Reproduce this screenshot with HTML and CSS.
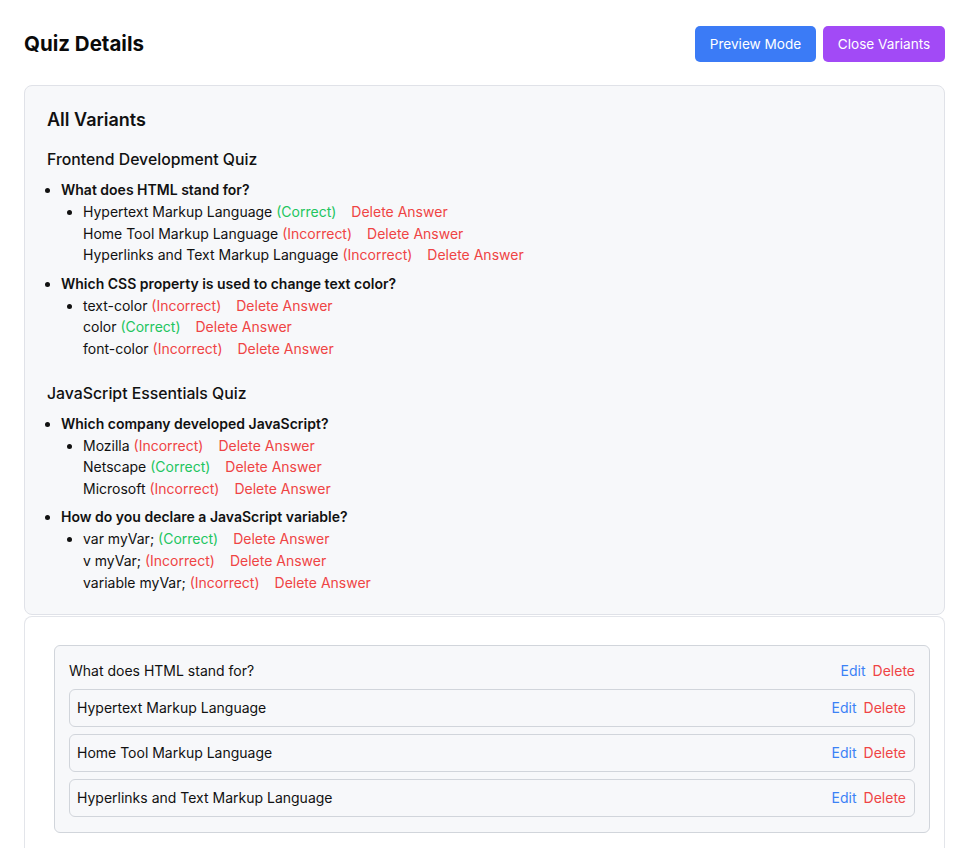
FILE: index.html
```html
<!DOCTYPE html>
<html lang="en">
<head>
<meta charset="utf-8">
<title>Quiz Details</title>
<link rel="stylesheet" href="styles.css">
</head>
<body>
<div class="page">
  <header class="header">
    <h1 class="title">Quiz Details</h1>
    <div class="actions">
      <button class="btn btn-blue">Preview Mode</button>
      <button class="btn btn-purple">Close Variants</button>
    </div>
  </header>

  <section class="variants">
    <h2 class="variants-title">All Variants</h2>

    <div class="quiz">
      <h3 class="quiz-title">Frontend Development Quiz</h3>
      <ul class="questions">
        <li class="question">
          <span class="q-text">What does HTML stand for?</span>
          <ul class="answers">
            <li class="answer">Hypertext Markup Language <span class="ok">(Correct)</span><span class="del">Delete Answer</span></li>
            <li class="answer">Home Tool Markup Language <span class="bad">(Incorrect)</span><span class="del">Delete Answer</span></li>
            <li class="answer">Hyperlinks and Text Markup Language <span class="bad">(Incorrect)</span><span class="del">Delete Answer</span></li>
          </ul>
        </li>
        <li class="question">
          <span class="q-text">Which CSS property is used to change text color?</span>
          <ul class="answers">
            <li class="answer">text-color <span class="bad">(Incorrect)</span><span class="del">Delete Answer</span></li>
            <li class="answer">color <span class="ok">(Correct)</span><span class="del">Delete Answer</span></li>
            <li class="answer">font-color <span class="bad">(Incorrect)</span><span class="del">Delete Answer</span></li>
          </ul>
        </li>
      </ul>
    </div>

    <div class="quiz">
      <h3 class="quiz-title">JavaScript Essentials Quiz</h3>
      <ul class="questions">
        <li class="question">
          <span class="q-text">Which company developed JavaScript?</span>
          <ul class="answers">
            <li class="answer">Mozilla <span class="bad">(Incorrect)</span><span class="del">Delete Answer</span></li>
            <li class="answer">Netscape <span class="ok">(Correct)</span><span class="del">Delete Answer</span></li>
            <li class="answer">Microsoft <span class="bad">(Incorrect)</span><span class="del">Delete Answer</span></li>
          </ul>
        </li>
        <li class="question">
          <span class="q-text">How do you declare a JavaScript variable?</span>
          <ul class="answers">
            <li class="answer">var myVar; <span class="ok">(Correct)</span><span class="del">Delete Answer</span></li>
            <li class="answer">v myVar; <span class="bad">(Incorrect)</span><span class="del">Delete Answer</span></li>
            <li class="answer">variable myVar; <span class="bad">(Incorrect)</span><span class="del">Delete Answer</span></li>
          </ul>
        </li>
      </ul>
    </div>
  </section>

  <section class="editor">
    <div class="q-card">
      <div class="q-head">
        <span>What does HTML stand for?</span>
        <span class="links"><a class="edit">Edit</a><a class="delete">Delete</a></span>
      </div>
      <div class="a-row">
        <span>Hypertext Markup Language</span>
        <span class="links"><a class="edit">Edit</a><a class="delete">Delete</a></span>
      </div>
      <div class="a-row">
        <span>Home Tool Markup Language</span>
        <span class="links"><a class="edit">Edit</a><a class="delete">Delete</a></span>
      </div>
      <div class="a-row">
        <span>Hyperlinks and Text Markup Language</span>
        <span class="links"><a class="edit">Edit</a><a class="delete">Delete</a></span>
      </div>
    </div>
    <div class="q-card">
      <div class="q-head">
        <span>Which CSS property is used to change text color?</span>
        <span class="links"><a class="edit">Edit</a><a class="delete">Delete</a></span>
      </div>
    </div>
  </section>
</div>
</body>
</html>
```

FILE: styles.css
```css
* { box-sizing: border-box; }
html, body { margin: 0; padding: 0; background: #fff; }
body {
  font-family: Inter, "Noto Sans", sans-serif;
  color: #111;
  font-size: 14px;
}
.page { padding: 26px 21px 0 24px; }

.header {
  display: flex;
  justify-content: space-between;
  align-items: center;
  margin-bottom: 23px;
}
.title { margin: 0; font-size: 20.5px; font-weight: 700; line-height: 32px; color: #0a0a0a; }
.actions { display: flex; gap: 7px; }
.btn {
  border: none;
  color: #fff;
  font-family: inherit;
  font-size: 13.6px;
  height: 36px;
  padding: 0;
  text-align: center;
  white-space: nowrap;
  border-radius: 5px;
}
.btn-blue { background: #3b7bf6; width: 121px; }
.btn-purple { background: #a24af6; width: 122px; }

.variants {
  background: #f7f8fa;
  border: 1px solid #e0e2e8;
  border-radius: 8px;
  padding: 20px 20px 21px 22px;
}
.variants-title { margin: 0 0 12px; font-size: 18px; font-weight: 600; line-height: 28px; }
.quiz { margin-bottom: 20px; }
.quiz:last-child { margin-bottom: 0; }
.quiz-title { margin: 0 0 5px; font-size: 15.8px; font-weight: 500; line-height: 28px; }
.questions { margin: 0; padding-left: 14px; list-style: disc; }
.question { margin-bottom: 7px; line-height: 22px; }
.question:last-child { margin-bottom: 0; }
.q-text { font-weight: 600; }
.answers { margin: 0; padding-left: 22px; list-style: disc; }
.answer { line-height: 21.6px; }
.answer + .answer { list-style: none; }
.ok { color: #22c55e; }
.bad { color: #ef4444; }
.del { color: #ef4444; margin-left: 15px; }

.editor {
  margin-top: 1px;
  background: #fff;
  border: 1px solid #e3e5ea;
  border-bottom: none;
  border-radius: 8px 8px 0 0;
  padding: 28px 14px 0 29px;
}
.q-card {
  background: #f7f8fa;
  border: 1px solid #d1d5db;
  border-radius: 6px;
  padding: 14px 14px 15px 14px;
  margin-bottom: 15px;
}
.q-head {
  display: flex;
  justify-content: space-between;
  align-items: center;
  line-height: 22px;
}
.a-row {
  display: flex;
  justify-content: space-between;
  align-items: center;
  margin-top: 7px;
  border: 1px solid #d1d5db;
  border-radius: 6px;
  padding: 7px 8px 7px 7px;
  line-height: 22px;
}
.links { display: flex; gap: 7px; }
.edit { color: #3b82f6; }
.delete { color: #ef4444; }
```
